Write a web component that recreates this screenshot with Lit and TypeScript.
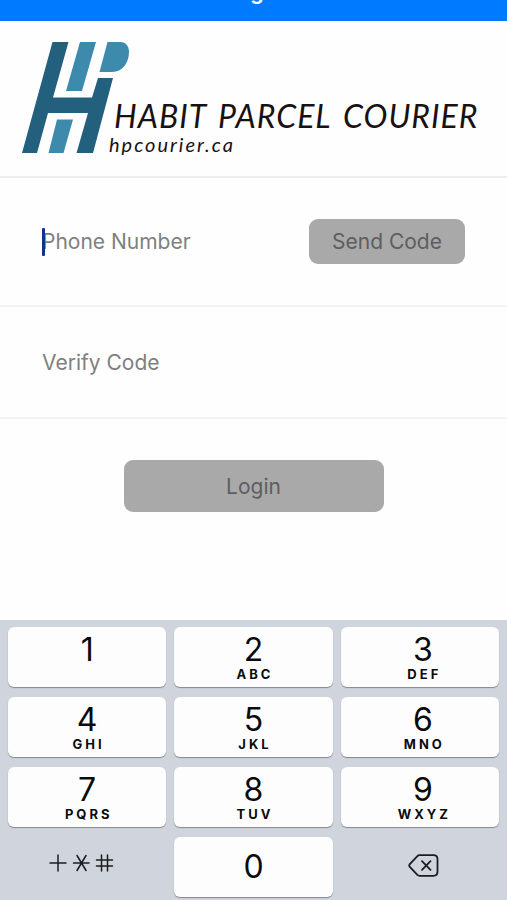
import { LitElement, html, css, svg, nothing } from "lit";
import { customElement, property } from "lit/decorators.js";

@customElement("brand-logo")
class BrandLogo extends LitElement {
  static styles = css`
    :host {
      display: block;
    }
    .logo {
      display: block;
      width: 100%;
    }
    .dark {
      fill: #23607d;
    }
    .light {
      fill: #3d8aad;
    }
    .word {
      fill: #1a1212;
      font-family: Lato, "Liberation Sans", sans-serif;
      font-style: italic;
    }
    .name {
      font-size: 32px;
      letter-spacing: 1px;
    }
    .site {
      font-size: 20px;
      letter-spacing: 2px;
    }
  `;

  render() {
    return html`
      <svg class="logo" viewBox="0 0 507 155" role="img" aria-label="Habit Parcel Courier">
        ${svg`
          <path class="dark" d="M52.5 21H68.5L53 76.5H92L98 57H113L93 132H76.5L88 92H48L37 132H22Z" />
          <path class="light" d="M80 21H96L82 70H66Z" />
          <path class="light" d="M107.500 21H120.500C126 21 129 25.500 129 31C129 42 122 51 112.500 51H99.500Z" />
          <path class="light" d="M57 98.500H73L63.500 132H48.500Z" />
          <text class="word name" y="107"><tspan x="114">HABIT</tspan> <tspan x="218">PARCEL</tspan> <tspan x="343">COURIER</tspan></text>
          <text class="word site" x="109" y="131">hpcourier.ca</text>
        `}
      </svg>
    `;
  }
}

@customElement("number-key")
class NumberKey extends LitElement {
  @property() digit = "";
  @property() letters = "";

  static styles = css`
    :host {
      display: block;
    }
    .key {
      display: flex;
      flex-direction: column;
      align-items: center;
      justify-content: flex-start;
      box-sizing: border-box;
      width: 100%;
      height: 60px;
      padding: 5px 0 0 var(--key-inset, 0);
      border: 0;
      border-radius: 6px;
      background: #fdfdfe;
      box-shadow: 0 1px 1px #85888e;
      color: #0b0b0c;
      font-family: Inter, "Liberation Sans", sans-serif;
    }
    .key.centered {
      justify-content: center;
      padding-top: 0;
    }
    .digit {
      font-size: 32px;
      line-height: 36px;
    }
    .letters {
      padding-left: 3px;
      font-size: 13px;
      line-height: 12px;
      font-weight: 700;
      letter-spacing: 3px;
    }
  `;

  render() {
    return html`
      <button class="key ${this.digit === "0" ? "centered" : ""}" type="button">
        <span class="digit">${this.digit}</span>
        ${this.letters ? html`<span class="letters">${this.letters}</span>` : nothing}
      </button>
    `;
  }
}

const KEYS = [
  ["1", ""],
  ["2", "ABC"],
  ["3", "DEF"],
  ["4", "GHI"],
  ["5", "JKL"],
  ["6", "MNO"],
  ["7", "PQRS"],
  ["8", "TUV"],
  ["9", "WXYZ"],
];

@customElement("number-pad")
class NumberPad extends LitElement {
  static styles = css`
    :host {
      display: block;
      background: #d0d4dc;
    }
    .grid {
      display: grid;
      grid-template-columns: repeat(3, 1fr);
      gap: 10px 8px;
      padding: 7px 8px 3px;
    }
    .grid > :nth-child(3n) {
      --key-inset: 6px;
    }
    .plain {
      display: flex;
      align-items: center;
      justify-content: center;
      height: 60px;
      padding: 0 0 0 var(--key-inset, 0);
      border: 0;
      background: none;
    }
    .icon {
      fill: none;
      stroke: #1b1c1f;
      stroke-linecap: round;
      stroke-linejoin: round;
    }
  `;

  render() {
    return html`
      <div class="grid">
        ${KEYS.map(([d, l]) => html`<number-key .digit=${d} .letters=${l}></number-key>`)}
        <button class="plain" type="button" aria-label="Symbols">
          <svg class="icon" width="76" height="26" viewBox="0 0 76 26" stroke-width="1.500">
            <path d="M1 9H17M9 1V17" />
            <path d="M24.500 9H40M28 1.500L37 16.500M37 1.500L28 16.500" />
            <path d="M47.500 6H63.500M47.500 12H63.500M52.500 1V17M58.500 1V17" />
          </svg>
        </button>
        <number-key digit="0"></number-key>
        <button class="plain" type="button" aria-label="Delete">
          <svg class="icon" width="34" height="28" viewBox="0 0 34 28" stroke-width="1.800">
            <path d="M13.500 2.200H27.500Q31.500 2.200 31.500 6.200V18.800Q31.500 22.800 27.500 22.800H13.500Q12.300 22.800 11.400 21.900L3.600 13.600Q2.600 12.500 3.600 11.400L11.400 3.100Q12.300 2.200 13.500 2.200Z" />
            <path d="M16 8.200L24.500 16.800M24.500 8.200L16 16.800" />
          </svg>
        </button>
      </div>
    `;
  }
}

@customElement("app-root")
class AppRoot extends LitElement {
  static styles = css`
    :host {
      display: flex;
      flex-direction: column;
      min-height: 100vh;
      background: #fefefe;
      font-family: Inter, "Liberation Sans", sans-serif;
    }
    .bar {
      display: flex;
      align-items: flex-end;
      justify-content: center;
      height: 21px;
      overflow: hidden;
      background: #007aff;
    }
    .title {
      margin: 0;
      padding-bottom: 18px;
      color: #fff;
      font-size: 22px;
      font-weight: 600;
      line-height: 24px;
    }
    .brand {
      border-bottom: 2px solid #eeeeef;
    }
    .row {
      display: flex;
      align-items: center;
      gap: 16px;
      padding: 0 42px;
      border-bottom: 2px solid #f3f3f4;
    }
    .phone {
      height: 127px;
    }
    .verify {
      height: 110px;
    }
    .field {
      position: relative;
      display: flex;
      flex: 1;
      min-width: 0;
    }
    .caret {
      position: absolute;
      top: 0;
      left: 0;
      width: 3px;
      height: 28px;
      border-radius: 1px;
      background: #14318c;
    }
    .input {
      width: 100%;
      height: 28px;
      padding: 0;
      border: 0;
      outline: 0;
      background: none;
      color: #222;
      font: inherit;
      font-size: 21px;
    }
    .input::placeholder {
      color: #808081;
      opacity: 1;
    }
    .action {
      padding: 0;
      border: 0;
      border-radius: 9px;
      background: #a9a9a9;
      color: #5e5e5e;
      font: inherit;
      font-size: 21px;
    }
    .send {
      width: 156px;
      height: 45px;
    }
    .submit {
      display: flex;
      justify-content: center;
      padding: 41px 0;
    }
    .login {
      width: 260px;
      height: 52px;
    }
    .pad {
      margin-top: auto;
    }
  `;

  render() {
    return html`
      <header class="bar"><h1 class="title">Login</h1></header>
      <brand-logo class="brand"></brand-logo>
      <div class="row phone">
        <div class="field">
          <input class="input" type="tel" placeholder="Phone Number" aria-label="Phone Number" />
          <span class="caret"></span>
        </div>
        <button class="action send" type="button">Send Code</button>
      </div>
      <div class="row verify">
        <div class="field">
          <input class="input" type="text" inputmode="numeric" placeholder="Verify Code" aria-label="Verify Code" />
        </div>
      </div>
      <div class="submit">
        <button class="action login" type="button">Login</button>
      </div>
      <number-pad class="pad"></number-pad>
    `;
  }
}
